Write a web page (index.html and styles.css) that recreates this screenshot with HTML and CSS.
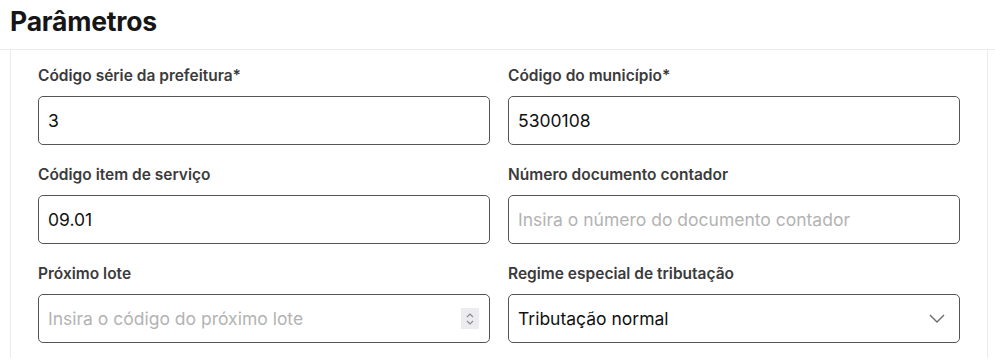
FILE: index.html
```html
<!DOCTYPE html>
<html lang="pt-BR">
<head>
  <meta charset="UTF-8" />
  <title>Parâmetros</title>
  <link rel="stylesheet" href="styles.css">
</head>
<body>

  <div class="header">
    <h1>Parâmetros</h1>
  </div>

  <div class="panel">
    <div class="form-grid">
      <div class="field">
        <label for="serie">Código série da prefeitura*</label>
        <div class="box">
          <input id="serie" type="text" value="3">
        </div>
      </div>

      <div class="field">
        <label for="municipio">Código do município*</label>
        <div class="box">
          <input id="municipio" type="text" value="5300108">
        </div>
      </div>

      <div class="field">
        <label for="item">Código item de serviço</label>
        <div class="box">
          <input id="item" type="text" value="09.01">
        </div>
      </div>

      <div class="field">
        <label for="contador">Número documento contador</label>
        <div class="box">
          <input id="contador" type="text" placeholder="Insira o número do documento contador">
        </div>
      </div>

      <div class="field">
        <label for="lote">Próximo lote</label>
        <div class="box">
          <input id="lote" type="text" placeholder="Insira o código do próximo lote">
          <span class="spinner">
            <svg width="10" height="14" viewBox="0 0 10 14">
              <path d="M2 5 L5 2 L8 5" fill="none" stroke="#8a8a93" stroke-width="1.2"/>
              <path d="M2 9 L5 12 L8 9" fill="none" stroke="#8a8a93" stroke-width="1.2"/>
            </svg>
          </span>
        </div>
      </div>

      <div class="field">
        <label>Regime especial de tributação</label>
        <div class="box select">
          <span class="select-value">Tributação normal</span>
          <svg class="chevron" width="16" height="9" viewBox="0 0 16 9">
            <path d="M1 1 L8 8 L15 1" fill="none" stroke="#6b6b6b" stroke-width="1.4"/>
          </svg>
        </div>
      </div>
    </div>
  </div>

</body>
</html>
```

FILE: styles.css
```css
body {
  margin: 0;
  font-family: Inter, "Noto Sans", sans-serif;
  background: #fff;
  color: #111;
}

.header {
  height: 50px;
  border-bottom: 1px solid #ebebeb;
  padding: 0 10px;
  box-sizing: border-box;
}

.header h1 {
  margin: 0;
  padding-top: 5px;
  font-size: 26.5px;
  font-weight: 700;
  line-height: 32px;
  color: #161616;
  letter-spacing: -0.2px;
}

.panel {
  margin: 0 7px 0 10px;
  height: 308px;
  border-left: 1px solid #ebebeb;
  border-right: 1px solid #ebebeb;
  padding: 16px 27px 0 27px;
  box-sizing: border-box;
}

.form-grid {
  display: grid;
  grid-template-columns: 1fr 1fr;
  column-gap: 18px;
  row-gap: 20px;
}

.field label {
  display: block;
  font-size: 15.5px;
  font-weight: 600;
  line-height: 20px;
  color: #3b3b3b;
  margin-bottom: 10px;
}

.box {
  display: flex;
  align-items: center;
  height: 49px;
  border: 1px solid #555;
  border-radius: 5px;
  box-sizing: border-box;
  padding: 0 9px;
}

.box input {
  flex: 1;
  min-width: 0;
  border: none;
  outline: none;
  padding: 0;
  font-family: inherit;
  font-size: 17.5px;
  color: #111;
  background: transparent;
}

.box input::placeholder {
  color: #b3b3b3;
}

.spinner {
  display: flex;
  align-items: center;
  justify-content: center;
  width: 18px;
  height: 21px;
  background: #ececf0;
  margin-right: 1px;
}

.select {
  justify-content: space-between;
  cursor: pointer;
}

.select-value {
  font-size: 17.5px;
  color: #111;
}

.chevron {
  margin-right: 5px;
}
```
